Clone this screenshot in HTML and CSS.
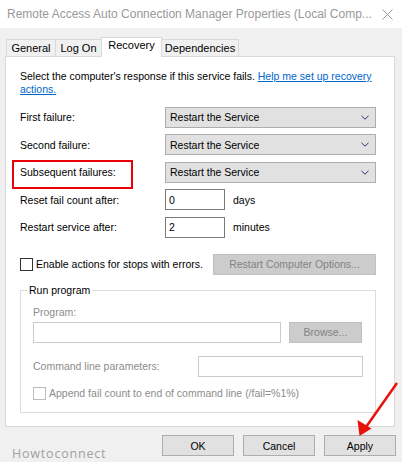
FILE: index.html
```html
<!DOCTYPE html>
<html>
<head>
<meta charset="utf-8">
<link rel="stylesheet" href="styles.css">
</head>
<body>
<div class="window">
  <div class="titlebar">
    <span class="title">Remote Access Auto Connection Manager Properties (Local Comp...</span>
    <svg class="close" width="11" height="11" viewBox="0 0 11 11"><path d="M0.5 0.5L10.5 10.5M10.5 0.5L0.5 10.5" stroke="#9a9a9a" stroke-width="1" fill="none"/></svg>
  </div>
  <div class="client">
    <div class="tabs">
      <div class="tab t-general">General</div>
      <div class="tab t-logon">Log On</div>
      <div class="tab t-recovery active">Recovery</div>
      <div class="tab t-deps">Dependencies</div>
    </div>
    <div class="panel">
      <p class="intro">Select the computer's response if this service fails. <a class="link">Help me set up recovery<br>actions.</a></p>
      <div class="rows">
        <div class="row">
          <span class="label">First failure:</span>
          <div class="select"><span>Restart the Service</span><svg class="chev" width="8" height="5" viewBox="0 0 8 5"><path d="M0.5 0.8L4 4.2L7.5 0.8" stroke="#2b3a67" stroke-width="1" fill="none"/></svg></div>
        </div>
        <div class="row">
          <span class="label">Second failure:</span>
          <div class="select"><span>Restart the Service</span><svg class="chev" width="8" height="5" viewBox="0 0 8 5"><path d="M0.5 0.8L4 4.2L7.5 0.8" stroke="#2b3a67" stroke-width="1" fill="none"/></svg></div>
        </div>
        <div class="row">
          <span class="label highlight">Subsequent failures:</span>
          <div class="select"><span>Restart the Service</span><svg class="chev" width="8" height="5" viewBox="0 0 8 5"><path d="M0.5 0.8L4 4.2L7.5 0.8" stroke="#2b3a67" stroke-width="1" fill="none"/></svg></div>
        </div>
        <div class="row">
          <span class="label">Reset fail count after:</span>
          <div class="input small">0</div>
          <span class="unit">days</span>
        </div>
        <div class="row">
          <span class="label">Restart service after:</span>
          <div class="input small">2</div>
          <span class="unit">minutes</span>
        </div>
      </div>
      <div class="check-row">
        <span class="box"></span>
        <span class="check-label">Enable actions for stops with errors.</span>
        <div class="btn disabled wide">Restart Computer Options...</div>
      </div>
      <fieldset class="group">
        <legend>Run program</legend>
        <div class="g-label">Program:</div>
        <div class="prog-row">
          <div class="input dis prog"></div>
          <div class="btn disabled browse">Browse...</div>
        </div>
        <div class="cmd-row">
          <span class="g-label">Command line parameters:</span>
          <div class="input dis cmd"></div>
        </div>
        <div class="append-row">
          <span class="box dis"></span>
          <span class="g-label">Append fail count to end of command line (/fail=%1%)</span>
        </div>
      </fieldset>
    </div>
    <div class="footer">
      <span class="watermark">Howtoconnect</span>
      <div class="buttons">
        <div class="btn">OK</div>
        <div class="btn">Cancel</div>
        <div class="btn">Apply</div>
      </div>
    </div>
  </div>
  <svg class="arrow" width="402" height="462" viewBox="0 0 402 462">
    <line x1="397" y1="383" x2="366" y2="427" stroke="#e8120c" stroke-width="2.5"/>
    <polygon points="359.5,436 357.5,420 371.5,428.5" fill="#e8120c"/>
  </svg>
</div>
</body>
</html>
```
FILE: styles.css
```css
* { box-sizing: border-box; }
html, body { margin: 0; padding: 0; }
body {
  width: 402px;
  height: 462px;
  overflow: hidden;
  font-family: "Liberation Sans", Arial, sans-serif;
  font-size: 10.5px;
  color: #000;
  background: #f0f0f0;
}
.window { position: relative; width: 402px; height: 462px; }
.titlebar {
  height: 28px;
  background: #fff;
  display: flex;
  align-items: center;
  justify-content: space-between;
  padding: 0 9px 0 7px;
}
.title { color: #999; font-size: 12px; white-space: nowrap; }
.close { display: block; }
.client { height: 434px; display: flex; flex-direction: column; }
.tabs {
  height: 28px;
  display: flex;
  align-items: flex-end;
  padding-left: 6px;
}
.tab {
  height: 17px;
  border: 1px solid #d9d9d9;
  border-bottom: none;
  border-right: none;
  background: #f0f0f0;
  display: flex;
  align-items: center;
  justify-content: center;
  font-size: 11px;
}
.t-deps { border-right: 1px solid #d9d9d9; }
.t-general { width: 49px; }
.t-logon { width: 46px; }
.t-recovery { width: 61px; }
.t-deps { width: 78px; }
.tab.active {
  height: 20px;
  background: #fff;
  margin-bottom: -1px;
  position: relative;
  z-index: 1;
  padding-bottom: 4px;
  border-right: 1px solid #d9d9d9;
  margin-right: -1px;
}
.panel {
  height: 372px;
  margin: 0 7px 0 5px;
  border: 1px solid #d9d9d9;
  background: #fff;
  padding: 13px 18px 0 14px;
}
.intro { margin: 0; line-height: 13px; white-space: nowrap; }
.link { color: #0066cc; text-decoration: underline; }
.rows { margin-top: 11px; display: flex; flex-direction: column; gap: 6.5px; }
.row { display: flex; align-items: center; height: 21px; }
.label { width: 145px; flex: none; position: relative; }
.highlight::after {
  content: "";
  position: absolute;
  left: -8px;
  top: -6px;
  width: 117px;
  height: 25px;
  border: 2.5px solid #e8000b;
}
.select {
  width: 211px;
  height: 21px;
  background: #e1e1e1;
  border: 1px solid #adadad;
  display: flex;
  align-items: center;
  justify-content: space-between;
  padding: 0 6px 0 4px;
}
.chev { display: block; }
.input {
  height: 21px;
  border: 1px solid #7a7a7a;
  background: #fff;
  display: flex;
  align-items: center;
  padding-left: 3px;
}
.input.small { width: 60px; }
.unit { margin-left: 8px; }
.check-row { display: flex; align-items: center; height: 21px; margin-top: 16px; }
.box { width: 13px; height: 13px; border: 1px solid #333; background: #fff; flex: none; }
.check-label { margin-left: 3px; }
.btn {
  height: 21px;
  background: #e1e1e1;
  border: 1px solid #adadad;
  display: flex;
  align-items: center;
  justify-content: center;
}
.btn.disabled { background: #cccccc; border-color: #bfbfbf; color: #838383; }
.btn.wide { width: 163px; margin-left: auto; }
.group {
  margin: 9px 0 0 0;
  padding: 0 12px 12px 12px;
  border: 1px solid #dcdcdc;
  min-width: 0;
}
.group legend { margin-left: -6px; padding: 0 2px; line-height: 13px; }
.g-label { color: #8c8c8c; line-height: 13px; }
.group > .g-label { margin-top: 9px; }
.prog-row { display: flex; margin-top: 3px; }
.input.dis { border-color: #cccccc; }
.input.prog { width: 248px; }
.btn.browse { width: 73px; margin-left: 8px; }
.cmd-row { display: flex; align-items: center; justify-content: space-between; margin-top: 13px; }
.input.cmd { width: 165px; }
.append-row { display: flex; align-items: center; margin-top: 10px; }
.box.dis { border-color: #bcbcbc; }
.append-row .g-label { margin-left: 3px; }
.footer {
  display: flex;
  justify-content: space-between;
  align-items: flex-start;
  padding: 8px 6px 0 12px;
}
.watermark {
  color: #a0a0a0;
  font-family: "Open Sans", sans-serif;
  font-size: 12.5px;
  letter-spacing: 0.8px;
  margin-top: 10px;
}
.buttons { display: flex; gap: 9px; }
.buttons .btn { width: 72px; }
.arrow { position: absolute; left: 0; top: 0; pointer-events: none; }
```
